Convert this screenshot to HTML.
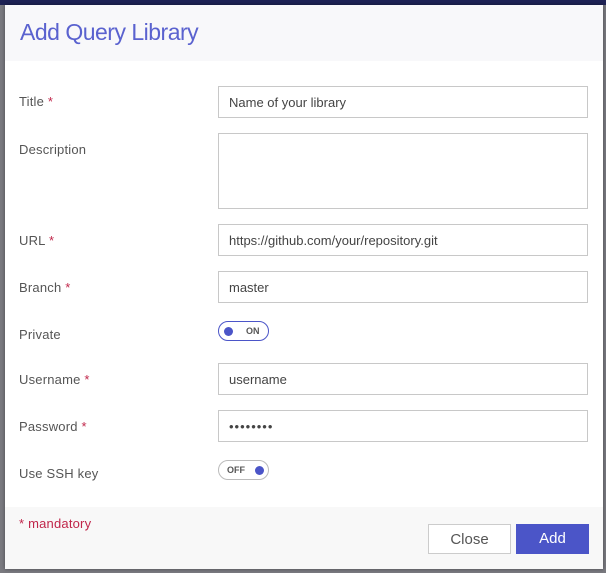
<!DOCTYPE html>
<html><head><style>
*{box-sizing:border-box;margin:0;padding:0}
body{width:606px;height:573px;background:#7a7a80;font-family:"Liberation Sans",sans-serif;position:relative;overflow:hidden}
.top{position:absolute;left:0;top:0;width:606px;height:5px;background:#1e2255}
.m{position:absolute;left:5px;top:5px;width:598px;height:564px;background:#fff;box-shadow:0 0 4px rgba(0,0,0,.4)}
.hd{position:absolute;left:0;top:0;width:598px;height:56px;background:#f8f8fa}
.hd h1{position:absolute;left:15px;top:14px;font-weight:normal;font-size:23px;color:#5a62cf;letter-spacing:-0.5px}
.l{position:absolute;left:14px;font-size:13px;color:#555;letter-spacing:0.2px}
.l b{color:#c0264a;font-weight:normal}
.i{position:absolute;left:213px;width:370px;height:32px;border:1px solid #c8c8c8;font-size:13px;color:#444;padding:8px 10px}
.ft{position:absolute;left:0;top:502px;width:598px;height:62px;background:#f8f8f8}
.tg{position:absolute;left:213px;width:51px;height:20px;border:1px solid #4b55c8;border-radius:10px;font-size:9px;font-weight:bold;color:#555}
.dot{position:absolute;top:5px;width:9px;height:9px;border-radius:50%;background:#4b55c8}
.btn{position:absolute;top:519px;height:30px;font-size:15px;text-align:center;line-height:29px}
</style></head><body>
<div class="top"></div>
<div class="m">
<div class="hd"><h1>Add Query Library</h1></div>
<div class="l" style="top:89px">Title <b>*</b></div>
<div class="i" style="top:81px">Name of your library</div>
<div class="l" style="top:137px">Description</div>
<div class="i" style="top:128px;height:76px"></div>
<div class="l" style="top:228px">URL <b>*</b></div>
<div class="i" style="top:219px">https://github.com/your/repository.git</div>
<div class="l" style="top:275px">Branch <b>*</b></div>
<div class="i" style="top:266px">master</div>
<div class="l" style="top:322px">Private</div>
<div class="tg" style="top:316px"><div class="dot" style="left:5px"></div><span style="position:absolute;left:27px;top:4px">ON</span></div>
<div class="l" style="top:367px">Username <b>*</b></div>
<div class="i" style="top:358px">username</div>
<div class="l" style="top:414px">Password <b>*</b></div>
<div class="i" style="top:405px;letter-spacing:1px">••••••••</div>
<div class="l" style="top:461px">Use SSH key</div>
<div class="tg" style="top:455px;border-color:#bbb"><div class="dot" style="left:36px"></div><span style="position:absolute;left:8px;top:4px">OFF</span></div>
<div class="ft"></div>
<div class="l" style="top:511px;color:#c0264a">* mandatory</div>
<div class="btn" style="left:423px;width:83px;background:#fff;border:1px solid #ccc;color:#555">Close</div>
<div class="btn" style="left:511px;width:73px;background:#4b55c8;color:#fff">Add</div>
</div>
</body></html>
